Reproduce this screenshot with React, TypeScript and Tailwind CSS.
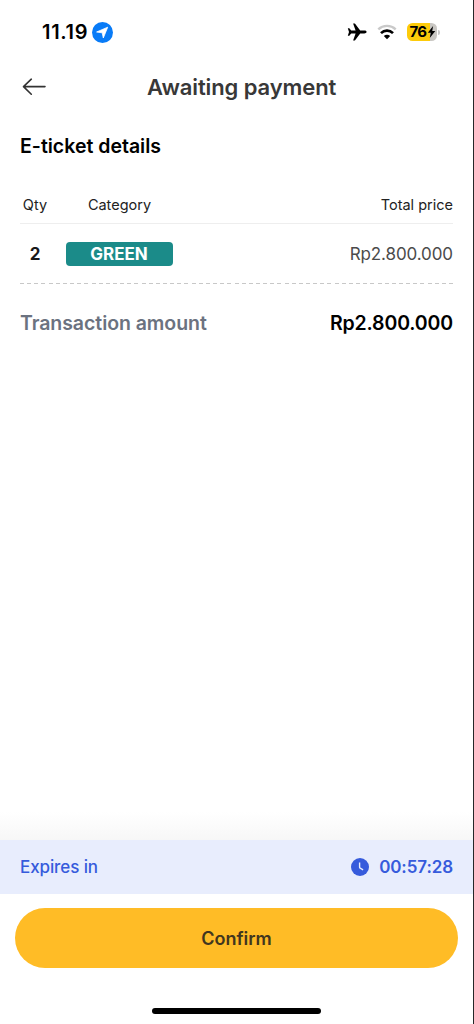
import type { ReactNode } from "react";

interface Ticket {
  qty: number;
  category: string;
  price: string;
}

const tickets: Ticket[] = [{ qty: 2, category: "GREEN", price: "Rp2.800.000" }];

function StatusBar() {
  return (
    <div className="flex h-16 shrink-0 items-center justify-between pl-[42px] pr-[33px]">
      <div className="flex items-center gap-[4px]">
        <span className="text-[20px] font-semibold leading-6 tracking-[0.7px] text-black">11.19</span>
        <svg width="21" height="21" viewBox="0 0 21 21">
          <circle cx="10.5" cy="10.5" r="10.5" fill="#087bf7" />
          <path d="M15.7 5.2 11.3 16l-1.1-5.2L4.6 10z" fill="#fff" stroke="#fff" strokeWidth=".8" strokeLinejoin="round" />
        </svg>
      </div>
      <div className="flex items-center">
        <svg width="20" height="18" viewBox="0 0 20 18" fill="#000">
          <path d="M19.6 9c0-.9-1.2-1.4-2.3-1.4h-4.1L8.1.8C7.9.5 7.7.4 7.4.4H6.1l2.5 7.2H4.2L2.3 5.2H.8L2 9 .8 12.8h1.5l1.9-2.4h4.4l-2.5 7.2h1.3c.3 0 .5-.1.7-.4l5.1-6.8h4.1c1.1 0 2.3-.5 2.3-1.4z" />
        </svg>
        <svg className="ml-[10px]" width="20" height="16" viewBox="0 0 20 16" fill="none">
          <path d="M1.3 5.3C6.2.7 13.8.7 18.7 5.3" stroke="#c9c9c9" strokeWidth="2.4" />
          <path d="M4 9.1c3.4-3.3 8.6-3.3 12 0" stroke="#000" strokeWidth="2.7" />
          <path d="M6.8 12c1.8-1.7 4.6-1.7 6.4 0L10 15.2z" fill="#000" />
        </svg>
        <div className="ml-[10px] flex h-[18px] w-[30px] items-center justify-center rounded-[5.5px] bg-[linear-gradient(90deg,#fdcb0a_76%,#c9c7c3_76%)]">
          <span className="ml-px text-[15px] font-bold leading-[18px] tracking-[-0.6px] text-black">76</span>
          <svg width="9" height="12" viewBox="0 0 9 13">
            <path d="M6.2 0 .5 7.4h3.2L2.6 13l6-7.7H5.3z" fill="#000" />
          </svg>
        </div>
        <div className="ml-px h-[5px] w-[2px] rounded-r-full bg-[#c9c9c9]" />
      </div>
    </div>
  );
}

function Header({ title }: { title: string }) {
  return (
    <header className="flex h-[46px] shrink-0 items-center pl-[22px]">
      <button className="w-[24px]" title="Back">
        <svg width="24" height="18" viewBox="0 0 24 18" fill="none" stroke="#333" strokeWidth="1.6" strokeLinecap="round" strokeLinejoin="round">
          <path d="M23 8.6H1.5M9.3 1.2 1.5 8.6l7.8 7.6" />
        </svg>
      </button>
      <h1 className="ml-[101px] whitespace-nowrap text-[22px] font-semibold leading-7 tracking-[-0.1px] text-[#383838]">{title}</h1>
    </header>
  );
}

function TicketRow({ ticket }: { ticket: Ticket }) {
  return (
    <div className="flex h-[59px] items-center">
      <span className="w-[30px] pt-[2px] text-center text-[17px] font-bold text-[#18181b]">{ticket.qty}</span>
      <span className="ml-4 flex h-6 w-[107px] items-center justify-center rounded-[4px] bg-[#1b8b89] pr-px text-[17px] font-bold leading-[24px] text-white">
        {ticket.category}
      </span>
      <span className="ml-auto pt-[2px] text-[17px] tracking-[-0.1px] text-[#4b4b4b]">{ticket.price}</span>
    </div>
  );
}

function Details({ children }: { children: ReactNode }) {
  return (
    <section className="px-5 pt-[24px]">
      <h2 className="text-[19.5px] font-semibold leading-6 text-black">E-ticket details</h2>
      <div className="mt-[36px] flex h-[30px] items-start border-b border-[#eeeeee] text-[14.5px] leading-[22px] text-[#222]">
        <span className="w-[30px] text-center">Qty</span>
        <span className="ml-4 w-[107px] text-center">Category</span>
        <span className="ml-auto">Total price</span>
      </div>
      {children}
      <div className="h-px bg-[repeating-linear-gradient(90deg,#c8c8c8_0_4px,transparent_4px_7.15px)]" />
      <div className="mt-[26px] flex items-center justify-between text-[19.5px] font-semibold leading-[26px]">
        <span className="tracking-[-0.06px] text-[#6b7280]">Transaction amount</span>
        <span className="tracking-[-0.15px] text-black">Rp2.800.000</span>
      </div>
    </section>
  );
}

function Footer() {
  return (
    <footer className="mt-auto shrink-0">
      <div className="h-[28px] bg-linear-to-b from-white to-[#f7f7f7]" />
      <div className="flex h-[54px] items-center bg-[#e8edfd] px-5 text-[17px] text-[#365bdc]">
        <span className="pt-[2px] font-medium tracking-[-0.1px]">Expires in</span>
        <svg className="ml-auto" width="18" height="18" viewBox="0 0 18 18">
          <circle cx="9" cy="9" r="9" fill="#365bdc" />
          <path d="M8.6 4.4v4.8q0 .7.6 1l2.9 1.6" fill="none" stroke="#e8edfd" strokeWidth="1.4" />
        </svg>
        <span className="ml-[10px] pt-[2px] font-semibold tracking-[-0.1px]">00:57:28</span>
      </div>
      <div className="px-[15px] pt-[14px]">
        <button className="h-[60px] w-full rounded-full bg-[#ffbc26] text-[18px] font-semibold text-[#41361f]">
          Confirm
        </button>
      </div>
      <div className="flex h-[56px] items-end justify-center pb-[10px]">
        <div className="h-[6px] w-[169px] rounded-full bg-black" />
      </div>
    </footer>
  );
}

export default function App() {
  return (
    <main className="flex h-[1024px] w-[474px] flex-col overflow-hidden border-r border-[#252729] bg-white font-['Inter',sans-serif]">
      <StatusBar />
      <Header title="Awaiting payment" />
      <Details>
        {tickets.map((ticket) => (
          <TicketRow key={ticket.category} ticket={ticket} />
        ))}
      </Details>
      <Footer />
    </main>
  );
}
